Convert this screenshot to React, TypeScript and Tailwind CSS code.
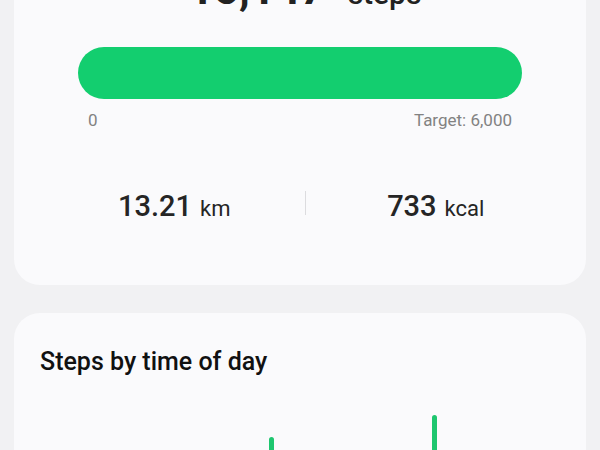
import React from "react";

const hourly = [0, 0, 0, 0, 0, 0, 12, 34, 58, 22, 99, 46, 70, 38, 18, 52, 64, 28, 121, 40, 26, 10, 0, 0];

const StatItem: React.FC<{ value: string; unit: string }> = ({ value, unit }) => (
  <div className="flex flex-1 items-baseline justify-center gap-[8px] leading-[36px] text-[#252525]">
    <span className="text-[29px] font-medium">{value}</span>
    <span className="text-[22px]">{unit}</span>
  </div>
);

const App: React.FC = () => {
  return (
    <div
      className="h-[450px] w-[600px] overflow-hidden bg-[#f1f1f3]"
      style={{ fontFamily: "Roboto, 'Liberation Sans', sans-serif" }}
    >
      <div className="-mt-[65px] flex flex-col gap-[28px] px-[14px]">
        {/* Daily steps card */}
        <div className="rounded-[26px] bg-[#fafafc] pb-[58px] pt-[32px]">
          <div className="flex items-baseline justify-center gap-[22px] pl-[10px] leading-[44px] text-[#222222]">
            <span className="text-[44px] font-bold">15,147</span>
            <span className="text-[30px] font-medium">steps</span>
          </div>

          <div className="mx-[64px] mt-[31px]">
            <div className="h-[52px] rounded-full bg-[#13ce6f]" />
            <div className="mt-[9px] flex justify-between px-[10px] text-[17px] leading-[24px] text-[#828282]">
              <span>0</span>
              <span>Target: 6,000</span>
            </div>
          </div>

          <div className="mt-[56px] flex pl-[30px] pr-[20px]">
            <StatItem value="13.21" unit="km" />
            <div className="mt-[3px] h-[24px] w-px self-start bg-[#dcdcdf]" />
            <StatItem value="733" unit="kcal" />
          </div>
        </div>

        {/* Steps by time of day card */}
        <div className="rounded-[26px] bg-[#fafafc] pb-[30px] pt-[33px]">
          <h2 className="pl-[26px] text-[25px] font-medium leading-[32px] text-[#111111]">
            Steps by time of day
          </h2>
          <div className="ml-[44px] mt-[18px] flex h-[140px] w-[489px] items-end">
            {hourly.map((h, i) => (
              <div key={i} className="flex flex-1 justify-center">
                {h > 0 && (
                  <div
                    className="w-[5px] rounded-t-full bg-[#1ec66f]"
                    style={{ height: `${h}px` }}
                  />
                )}
              </div>
            ))}
          </div>
        </div>
      </div>
    </div>
  );
};

export default App;
